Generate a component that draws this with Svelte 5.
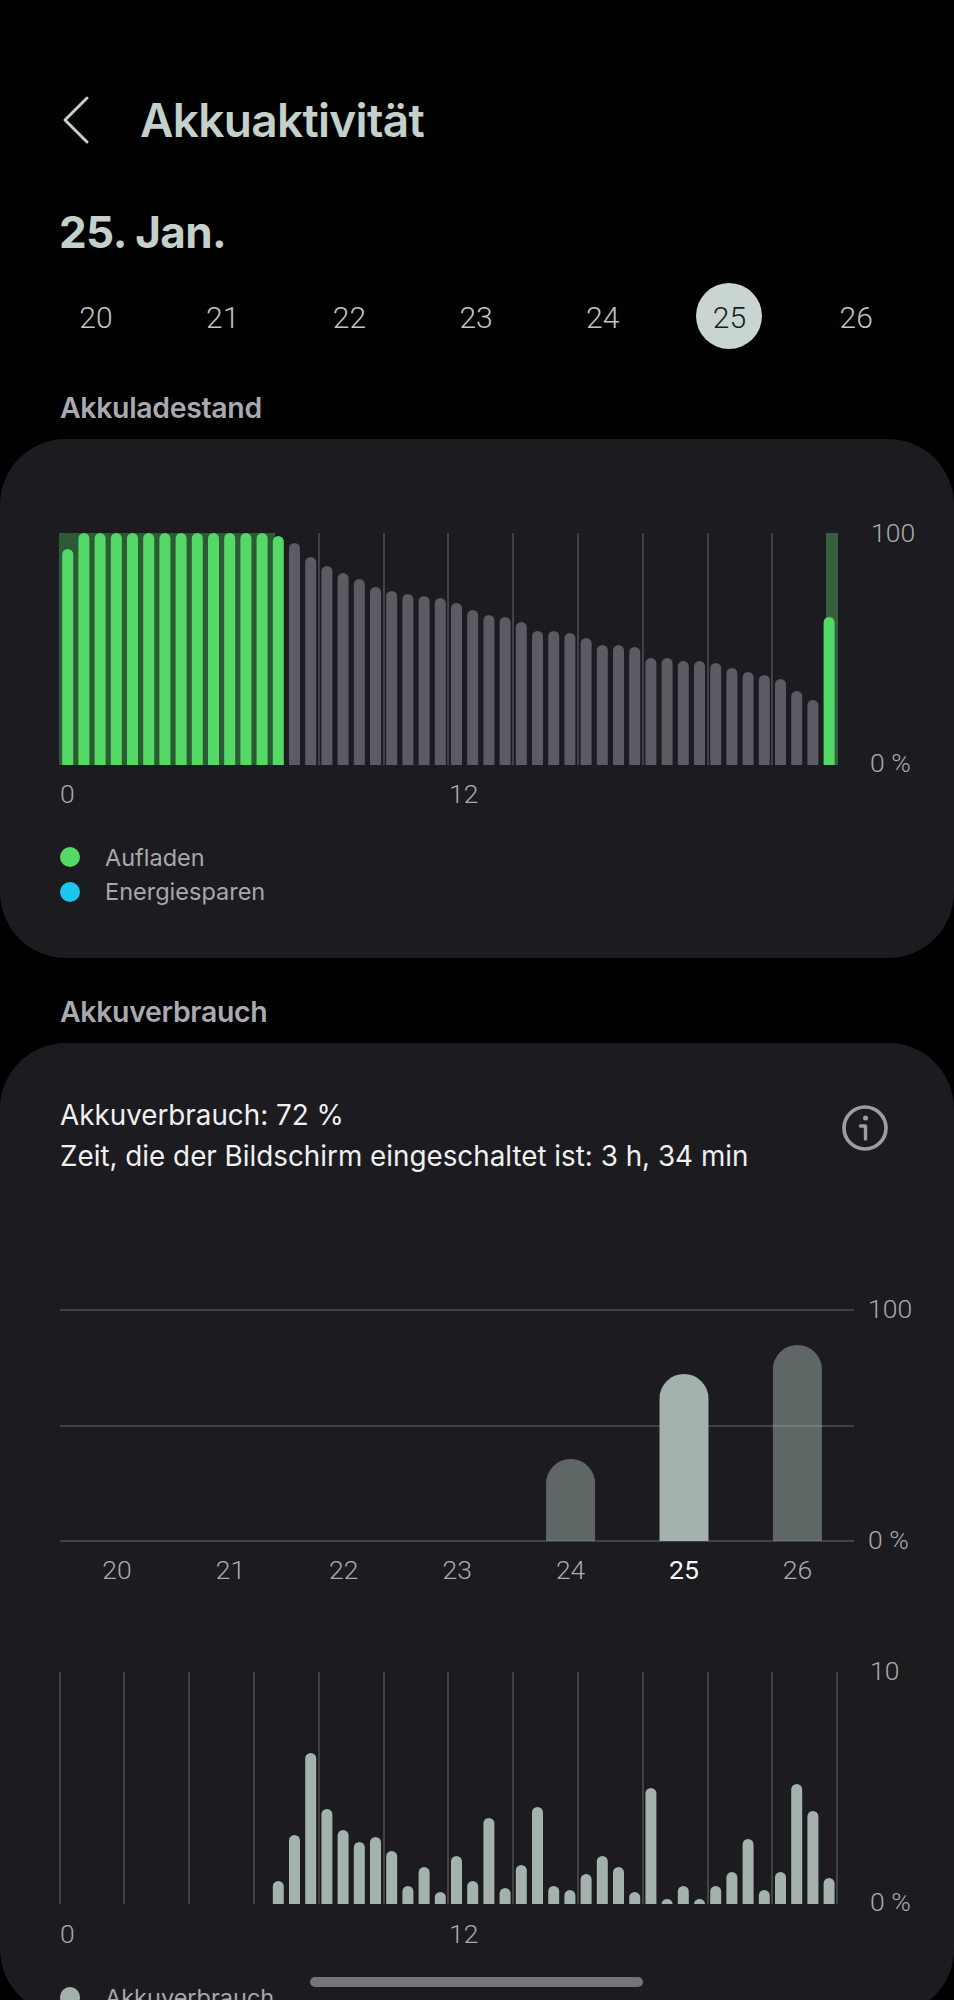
<script>
  const days = [20, 21, 22, 23, 24, 25, 26];
  const selectedDay = 25;

  const pitch = 16.2;
  const barW = 11;
  const barX = (i) => 62.2 + pitch * i;
  const gridXs = Array.from({ length: 13 }, (_, i) => Math.round(59.5 + 64.8 * i));

  // charge level per slot, 48 slots over the day
  const level = [
    216, 232, 232, 232, 232, 232, 232, 232, 232, 232, 232, 232, 232, 229, 222, 208, 199, 192, 186,
    178, 174, 171, 169, 167, 162, 155, 150, 148, 143, 134, 134, 132, 127, 120, 120, 118, 107, 107,
    104, 104, 102, 97, 93, 90, 86, 74, 65, 148
  ];
  const isCharging = (i) => i < 14 || i === 47;

  // usage per slot, starts at slot 13
  const usage = [
    23, 69, 151, 95, 74, 62, 67, 53, 18, 37, 12, 48, 23, 86, 16, 39, 97, 18, 14, 30, 48, 37, 12, 116,
    5, 18, 5, 18, 32, 65, 14, 32, 120, 93, 26
  ];

  const weekBars = [
    { day: 20, h: 0 },
    { day: 21, h: 0 },
    { day: 22, h: 0 },
    { day: 23, h: 0 },
    { day: 24, h: 82 },
    { day: 25, h: 167 },
    { day: 26, h: 196 }
  ];

  function bar(x, base, h, w) {
    const rx = w / 2;
    const ry = Math.min(rx, h);
    return `M${x} ${base}V${base - h + ry}A${rx} ${ry} 0 0 1 ${x + w} ${base - h + ry}V${base}Z`;
  }
</script>

<main class="page">
  <header class="top">
    <svg class="back" width="34" height="50" viewBox="0 0 34 50">
      <path d="M27 3 5 25l22 22" fill="none" stroke="#c4d0ca" stroke-width="3" stroke-linecap="round" stroke-linejoin="round" />
    </svg>
    <h1>Akkuaktivität</h1>
  </header>

  <h2 class="date">25. Jan.</h2>

  <div class="days">
    {#each days as d}
      <span class="day" class:active={d === selectedDay}>{d}</span>
    {/each}
  </div>

  <h3 class="section">Akkuladestand</h3>
  <section class="card first">
    <svg class="chart" width="954" height="375" viewBox="0 0 954 375">
      {#each gridXs as x}
        <rect x={x - 1} y="94" width="2" height="232" fill="#414146" />
      {/each}
      <rect x="59" y="94" width="216" height="232" fill="#2c5a36" />
      <rect x="826" y="94" width="12" height="232" fill="#36603f" />
      {#each level as h, i}
        <path d={bar(barX(i), 326, h, barW)} fill={isCharging(i) ? '#54d968' : '#5c5b64'} />
      {/each}
      <text class="axis" x="871" y="103">100</text>
      <text class="axis" x="870" y="333">0 %</text>
      <text class="axis" x="60" y="364">0</text>
      <text class="axis" x="449" y="364">12</text>
    </svg>
    <ul class="legend">
      <li><i style="background:#54d968"></i>Aufladen</li>
      <li><i style="background:#1ac8ee"></i>Energiesparen</li>
    </ul>
  </section>

  <h3 class="section second">Akkuverbrauch</h3>
  <section class="card usage">
    <div class="summary">
      <p>Akkuverbrauch: 72 %<br />Zeit, die der Bildschirm eingeschaltet ist: 3 h, 34 min</p>
      <svg class="info" width="46" height="46" viewBox="0 0 46 46">
        <circle cx="23" cy="23" r="21" fill="none" stroke="#9e9ea0" stroke-width="3.6" />
        <circle cx="23.5" cy="13" r="2.5" fill="#9e9ea0" />
        <path d="M18.5 21H23.5V34" fill="none" stroke="#9e9ea0" stroke-width="3.4" stroke-linecap="round" stroke-linejoin="round" />
      </svg>
    </div>

    <svg class="chart week" width="954" height="310" viewBox="0 0 954 310">
      <rect x="60" y="30" width="794" height="2" fill="#414146" />
      <rect x="60" y="146" width="794" height="2" fill="#414146" />
      <rect x="60" y="261" width="794" height="2" fill="#414146" />
      {#each weekBars as b, i}
        {#if b.h > 0}
          <path
            d={bar(92.5 + 113.4 * i, 262, b.h, 49)}
            fill="#a3b2ac"
            fill-opacity={b.day === selectedDay ? 1 : 0.5}
          />
        {/if}
        <text class="axis mid" class:now={b.day === selectedDay} x={117 + 113.4 * i} y="300">{b.day}</text>
      {/each}
      <text class="axis" x="868" y="39">100</text>
      <text class="axis" x="868" y="270">0 %</text>
    </svg>

    <svg class="chart hours" width="954" height="305" viewBox="0 0 954 305">
      {#each gridXs as x}
        <rect x={x - 1} y="23" width="2" height="232" fill="#414146" />
      {/each}
      {#each usage as h, i}
        <path d={bar(barX(i + 13), 255, h, barW)} fill="#a3b2ac" />
      {/each}
      <text class="axis" x="870" y="31">10</text>
      <text class="axis" x="870" y="262">0 %</text>
      <text class="axis" x="60" y="294">0</text>
      <text class="axis" x="449" y="294">12</text>
    </svg>

    <ul class="legend">
      <li><i style="background:#a3b2ac"></i>Akkuverbrauch</li>
    </ul>
  </section>

  <div class="home"></div>
</main>

<style>
  :global(body) {
    background: #000;
  }

  .page {
    position: relative;
    height: 2000px;
    overflow: hidden;
    background: #000;
    font-family: Inter, "Noto Sans", sans-serif;
    color: #c4d0ca;
  }

  .top {
    display: flex;
    align-items: center;
    height: 68px;
    padding: 86px 0 0 60px;
  }

  .back {
    margin-right: 46px;
  }

  h1 {
    margin: 0;
    font-size: 46px;
    font-weight: 600;
    letter-spacing: -0.7px;
    line-height: 68px;
  }

  .date {
    margin: 53px 0 0 59px;
    font-size: 44px;
    font-weight: 700;
    letter-spacing: -0.6px;
    line-height: 50px;
  }

  .days {
    display: grid;
    grid-template-columns: repeat(7, 66px);
    column-gap: 60.7px;
    margin: 26px 0 0 63px;
  }

  .day {
    display: flex;
    align-items: center;
    justify-content: center;
    box-sizing: border-box;
    height: 66px;
    padding-top: 2px;
    border-radius: 50%;
    font-family: Roboto, sans-serif;
    font-size: 30px;
    font-weight: 300;
    color: #c0c7c4;
  }

  .day.active {
    background: #c9d5d0;
    color: #1a1c1c;
  }

  .section {
    margin: 43px 0 0 60px;
    font-size: 28.4px;
    font-weight: 600;
    letter-spacing: -0.3px;
    line-height: 32px;
    color: #a9a9b1;
  }

  .section.second {
    margin-top: 38px;
  }

  .card {
    margin-top: 15px;
    background: #1b1b20;
    border-radius: 66px;
  }

  .card.first {
    height: 519px;
  }

  .chart {
    display: block;
  }

  .axis {
    font-family: Roboto, sans-serif;
    font-size: 26.5px;
    font-weight: 300;
    fill: #aaaaae;
  }

  .axis.mid {
    text-anchor: middle;
  }

  .axis.now {
    fill: #f6f6f6;
    font-weight: 400;
  }

  .legend {
    list-style: none;
    margin: 26px 0 0 60px;
    padding: 0;
    font-size: 23.5px;
    color: #a8a8aa;
  }

  .legend li {
    display: flex;
    align-items: center;
    height: 34.5px;
  }

  .legend i {
    width: 20px;
    height: 20px;
    margin-right: 25px;
    border-radius: 50%;
  }

  .summary {
    display: flex;
    justify-content: space-between;
    align-items: flex-start;
    padding: 51.5px 66px 0 60px;
  }

  .summary p {
    margin: 0;
    font-size: 27.8px;
    line-height: 41px;
    color: #f0f0f0;
  }

  .info {
    margin-top: 10.5px;
  }

  .week {
    margin-top: 102.5px;
  }

  .hours {
    margin-top: 60px;
  }

  .home {
    position: absolute;
    left: 310px;
    top: 1977px;
    width: 333px;
    height: 10px;
    border-radius: 5px;
    background: #757577;
  }
</style>
